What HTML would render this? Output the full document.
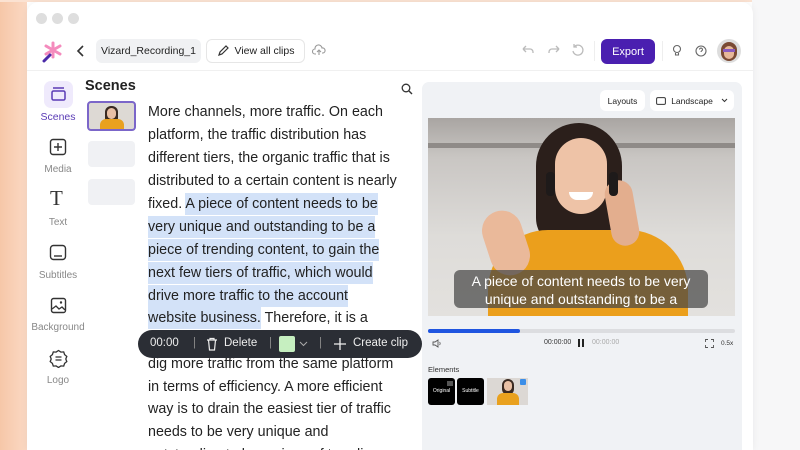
<!DOCTYPE html>
<html style="width:800px;height:450px;overflow:hidden"><head><meta charset="utf-8"><style>
*{box-sizing:border-box;margin:0;padding:0}
body{width:800px;height:450px;overflow:hidden;font-family:"Liberation Sans",sans-serif;background:linear-gradient(90deg,#f6c7a8 0px,#fbd9c4 27px,#fff 27px);position:relative}
.bg-r{position:absolute;left:752px;top:0;width:48px;height:450px;background:#f7f7f8}
.bg-t{position:absolute;left:0;top:0;width:800px;height:2px;background:#fbe2d2}
.win{position:absolute;left:27px;top:2px;width:726px;height:448px;background:#fff;border-radius:12px 12px 0 0;box-shadow:0 0 8px rgba(0,0,0,.06)}
.abs{position:absolute}
.dot{position:absolute;top:11px;width:11px;height:11px;border-radius:50%;background:#dedede}
.btn{position:absolute;border-radius:6px;font-size:11px;color:#222;display:flex;align-items:center;justify-content:center}
.side{position:absolute;width:60px;text-align:center;font-size:10px;color:#888}
.line{position:absolute;left:148px;font-size:14.3px;color:#222;height:23px;line-height:23px;white-space:nowrap}
.hl{background:#d3e2f8;padding:3px 0}
</style></head><body>
<div class="bg-t"></div><div class="bg-r"></div>
<div class="win">
 <div class="dot" style="left:9px"></div><div class="dot" style="left:25px"></div><div class="dot" style="left:41px"></div>
</div>
<svg class="abs" style="left:42px;top:41px" width="20" height="22" viewBox="0 0 20 22"><g stroke="#f48bbd" stroke-width="3" stroke-linecap="round"><line x1="11" y1="2" x2="11" y2="16"/><line x1="4" y1="5" x2="18" y2="13"/><line x1="18" y1="5" x2="4" y2="13"/></g><line x1="2" y1="20" x2="8" y2="14" stroke="#4b2ba8" stroke-width="3" stroke-linecap="round"/></svg>
<svg class="abs" style="left:76px;top:44px" width="10" height="14"><path d="M7 2L2 7l5 5" stroke="#333" stroke-width="1.6" fill="none"/></svg>
<div class="btn" style="left:96px;top:39px;width:105px;height:24px;background:#f0f1f3;font-size:10.5px">Vizard_Recording_1</div>
<div class="btn" style="left:206px;top:39px;width:99px;height:24px;border:1px solid #e6e6e6;font-size:10.5px"><svg width="12" height="12" style="margin-right:6px"><path d="M2 10l1-3 6-6 2 2-6 6z" stroke="#333" fill="none" stroke-width="1.2"/></svg>View all clips</div>
<svg class="abs" style="left:312px;top:44px" width="14" height="12"><path d="M4 10H3a2.5 2.5 0 010-5 3.5 3.5 0 017-1 2.5 2.5 0 011 5h-1M7 11V6M5 8l2-2 2 2" stroke="#999" fill="none" stroke-width="1.1"/></svg>
<div class="abs" style="left:27px;top:70px;width:726px;height:1px;background:#f0f0f0"></div>
<svg class="abs" style="left:520px;top:43px" width="70" height="14"><g stroke="#bbb" fill="none" stroke-width="1.3"><path d="M3 6h7a3 3 0 013 3v1M3 6l3-3M3 6l3 3"/><path d="M39 6h-7a3 3 0 00-3 3v1M39 6l-3-3M39 6l-3 3"/><path d="M54 4a5 5 0 11-1 4M54 1v3h3"/></g></svg>
<div class="abs" style="left:594px;top:41px;width:1px;height:20px;background:#eee"></div>
<div class="btn" style="left:601px;top:39px;width:54px;height:25px;background:#4a1fb0;color:#fff;font-size:11px">Export</div>
<div class="abs" style="left:662px;top:41px;width:1px;height:20px;background:#eee"></div>
<svg class="abs" style="left:671px;top:44px" width="40" height="14"><g stroke="#666" fill="none" stroke-width="1.1"><circle cx="6" cy="5" r="3.5"/><path d="M4.5 9v2h3V9"/><circle cx="30" cy="7" r="5"/><path d="M28.5 5.5a1.5 1.5 0 113 .2c0 1-1.5 1-1.5 2.3"/></g></svg>
<div class="abs" style="left:717px;top:39px;width:24px;height:24px;border-radius:50%;background:#ddd;overflow:hidden"><div class="abs" style="left:4px;top:3px;width:16px;height:19px;border-radius:8px;background:#7a4a34"></div><div class="abs" style="left:7px;top:7px;width:10px;height:13px;border-radius:5px;background:#e7b89a"></div><div class="abs" style="left:6px;top:10px;width:12px;height:3px;background:#8a5bbf"></div></div>
<div class="abs" style="left:44px;top:81px;width:29px;height:27px;border-radius:7px;background:#efeafc"></div>
<svg class="abs" style="left:50px;top:86px" width="17" height="16"><g stroke="#5a3bb5" fill="none" stroke-width="1.5"><line x1="3" y1="2" x2="14" y2="2"/><rect x="2" y="5" width="13" height="9" rx="1.5"/></g></svg>
<div class="side" style="left:28px;top:111px;color:#5a3bb5;font-size:10.5px">Scenes</div>
<svg class="abs" style="left:49px;top:138px" width="18" height="18"><rect x="1.5" y="1.5" width="15" height="15" rx="2.5" stroke="#333" fill="none" stroke-width="1.4"/><path d="M9 5v8M5 9h8" stroke="#333" stroke-width="1.4"/></svg>
<div class="side" style="left:28px;top:164px">Media</div>
<div class="abs" style="left:50px;top:186px;font-family:'Liberation Serif',serif;font-size:21px;color:#333">T</div>
<div class="side" style="left:28px;top:217px">Text</div>
<svg class="abs" style="left:49px;top:244px" width="18" height="18"><rect x="1.5" y="1.5" width="15" height="14" rx="3" stroke="#333" fill="none" stroke-width="1.4"/><path d="M5 12h8" stroke="#333" stroke-width="1.4"/></svg>
<div class="side" style="left:28px;top:270px">Subtitles</div>
<svg class="abs" style="left:50px;top:297px" width="17" height="17"><rect x="1.5" y="1.5" width="14" height="14" rx="2" stroke="#333" fill="none" stroke-width="1.4"/><path d="M2 12l4-3 3 3 3-2 3 3" stroke="#333" fill="none" stroke-width="1.3"/><circle cx="11" cy="5.5" r="1.2" fill="#333"/></svg>
<div class="side" style="left:28px;top:322px">Background</div>
<svg class="abs" style="left:49px;top:349px" width="19" height="19"><path d="M9.5 1.5l2.4 1.6 2.8-.2.9 2.7 2.2 1.8-1 2.6 1 2.6-2.2 1.8-.9 2.7-2.8-.2-2.4 1.6-2.4-1.6-2.8.2-.9-2.7-2.2-1.8 1-2.6-1-2.6 2.2-1.8.9-2.7 2.8.2z" stroke="#333" fill="none" stroke-width="1.3"/><path d="M6.5 8h6M6.5 11h6" stroke="#333" stroke-width="1.3"/></svg>
<div class="side" style="left:28px;top:375px">Logo</div>
<div class="abs" style="left:85px;top:78px;font-size:14.5px;font-weight:bold;color:#222">Scenes</div>
<svg class="abs" style="left:401px;top:83px" width="12" height="12"><circle cx="5" cy="5" r="3.8" stroke="#333" fill="none" stroke-width="1.3"/><path d="M8 8l3 3" stroke="#333" stroke-width="1.4"/></svg>
<div class="abs" style="left:87px;top:101px;width:49px;height:30px;border:2px solid #7b66c9;border-radius:4px;overflow:hidden;background:#ddd9d4">
 <div class="abs" style="left:16px;top:3px;width:13px;height:18px;border-radius:6px;background:#3a2a22"></div>
 <div class="abs" style="left:18px;top:5px;width:9px;height:11px;border-radius:5px;background:#e9c0a5"></div>
 <div class="abs" style="left:11px;top:16px;width:24px;height:12px;border-radius:6px 6px 0 0;background:#e9a11e"></div>
</div>
<div class="abs" style="left:88px;top:141px;width:47px;height:26px;border-radius:4px;background:#f0f1f4"></div>
<div class="abs" style="left:88px;top:179px;width:47px;height:26px;border-radius:4px;background:#f0f1f4"></div>
<div class="line" style="top:101px">More channels, more traffic. On each</div>
<div class="line" style="top:124px">platform, the traffic distribution has</div>
<div class="line" style="top:147px">different tiers, the organic traffic that is</div>
<div class="line" style="top:170px">distributed to a certain content is nearly</div>
<div class="line" style="top:193px">fixed. <span class="hl">A piece of content needs to be</span></div>
<div class="line" style="top:216px"><span class="hl">very unique and outstanding to be a</span></div>
<div class="line" style="top:239px"><span class="hl">piece of trending content, to gain the</span></div>
<div class="line" style="top:262px"><span class="hl">next few tiers of traffic, which would</span></div>
<div class="line" style="top:285px"><span class="hl">drive more traffic to the account</span></div>
<div class="line" style="top:307px"><span class="hl">website business.</span> Therefore, it is a</div>
<div class="line" style="top:353px">dig more traffic from the same platform</div>
<div class="line" style="top:376px">in terms of efficiency. A more efficient</div>
<div class="line" style="top:398px">way is to drain the easiest tier of traffic</div>
<div class="line" style="top:421px">needs to be very unique and</div>
<div class="line" style="top:444px">outstanding to be a piece of trending</div>
<div class="abs" style="left:138px;top:330px;width:284px;height:28px;border-radius:14px;background:#2b2e35;color:#eee;font-size:11.5px">
 <span class="abs" style="left:12px;top:7px">00:00</span>
 <span class="abs" style="left:55px;top:7px;color:#888">|</span>
 <svg class="abs" style="left:68px;top:7px" width="12" height="14"><path d="M1 3h10M4 3V1.5h4V3M2.5 3l1 10h5l1-10" stroke="#eee" fill="none" stroke-width="1.2"/></svg>
 <span class="abs" style="left:86px;top:7px">Delete</span>
 <span class="abs" style="left:131px;top:7px;color:#888">|</span>
 <div class="abs" style="left:141px;top:6px;width:16px;height:16px;border-radius:2px;background:#c6efc0"></div>
 <svg class="abs" style="left:161px;top:11px" width="9" height="6"><path d="M1 1l3.5 3.5L8 1" stroke="#aaa" fill="none"/></svg>
 <span class="abs" style="left:181px;top:7px;color:#888">|</span>
 <svg class="abs" style="left:196px;top:8px" width="12" height="12"><path d="M6 0v12M0 6h12" stroke="#eee" stroke-width="1.3"/></svg>
 <span class="abs" style="left:215px;top:7px">Create clip</span>
</div>
<div class="abs" style="left:422px;top:82px;width:320px;height:368px;background:#f0f2f5;border-radius:7px 7px 0 0"></div>
<div class="btn" style="left:600px;top:90px;width:45px;height:21px;background:#fff;font-size:8.5px">Layouts</div>
<div class="btn" style="left:650px;top:90px;width:84px;height:21px;background:#fff;font-size:8.5px"><svg width="10" height="8" style="margin-right:5px"><rect x=".6" y=".6" width="8.8" height="6.8" rx="1.3" stroke="#333" fill="none"/></svg>Landscape<svg width="7" height="5" style="margin-left:8px"><path d="M1 1l2.5 2.5L6 1" stroke="#333" fill="none"/></svg></div>
<div class="abs" style="left:428px;top:118px;width:307px;height:198px;overflow:hidden;background:linear-gradient(180deg,#a9a5a2 0,#c9c6c3 20%,#dedcd9 60%,#e3e1de 100%)">
 <div class="abs" style="left:0;top:25px;width:307px;height:5px;background:#8f8b88"></div>
 <div class="abs" style="left:108px;top:5px;width:86px;height:125px;border-radius:43px 43px 30px 30px;background:#2b1f1b"></div>
 <div class="abs" style="left:60px;top:112px;width:200px;height:110px;border-radius:60px 60px 0 0;background:#eb9f1c"></div>
 <div class="abs" style="left:127px;top:20px;width:52px;height:76px;border-radius:26px 26px 26px 26px;background:#eec3a7"></div>
 <div class="abs" style="left:141px;top:74px;width:24px;height:8px;border-radius:0 0 12px 12px;background:#fff"></div>
 <div class="abs" style="left:58px;top:92px;width:40px;height:66px;border-radius:20px;background:#eab99a;transform:rotate(-18deg)"></div>
 <div class="abs" style="left:180px;top:62px;width:28px;height:66px;border-radius:14px;background:#e3ae8e;transform:rotate(-10deg)"></div>
 <div class="abs" style="left:118px;top:54px;width:9px;height:24px;border-radius:4px;background:#1e1a1a"></div>
 <div class="abs" style="left:181px;top:54px;width:9px;height:24px;border-radius:4px;background:#1e1a1a"></div>
</div>
<div class="abs" style="left:454px;top:270px;width:254px;height:38px;border-radius:6px;background:rgba(70,70,70,.72);color:#fff;font-size:14px;line-height:18px;text-align:center;padding-top:2px">A piece of content needs to be very<br>unique and outstanding to be a</div>
<div class="abs" style="left:428px;top:329px;width:307px;height:4px;border-radius:2px;background:#dcdde0"></div>
<div class="abs" style="left:428px;top:329px;width:92px;height:4px;border-radius:2px;background:#1f55e0"></div>
<svg class="abs" style="left:432px;top:339px" width="10" height="9"><path d="M1 3h2l3-2v7l-3-2H1z" stroke="#555" fill="none" stroke-width=".9"/><path d="M7.5 3a2 2 0 010 3" stroke="#555" fill="none" stroke-width=".8"/></svg>
<div class="abs" style="left:544px;top:339px;font-size:7px;color:#333">00:00:00</div>
<div class="abs" style="left:578px;top:339px;width:2px;height:8px;background:#222"></div>
<div class="abs" style="left:582px;top:339px;width:2px;height:8px;background:#222"></div>
<div class="abs" style="left:592px;top:339px;font-size:7px;color:#aaa">00:00:00</div>
<svg class="abs" style="left:705px;top:339px" width="9" height="9"><path d="M.5 3V.5H3M6 .5h2.5V3M8.5 6v2.5H6M3 8.5H.5V6" stroke="#555" fill="none" stroke-width=".9"/></svg>
<div class="abs" style="left:721px;top:340px;font-size:6.5px;color:#333">0.5x</div>
<div class="abs" style="left:428px;top:365px;font-size:7.5px;color:#333">Elements</div>
<div class="abs" style="left:428px;top:378px;width:27px;height:27px;border-radius:3px;background:#000;color:#fff;font-size:5px;text-align:center;line-height:27px">Original</div>
<div class="abs" style="left:447px;top:381px;width:6px;height:5px;background:#555"></div>
<div class="abs" style="left:457px;top:378px;width:27px;height:27px;border-radius:3px;background:#000;color:#fff;font-size:5px;text-align:center;line-height:27px">Subtitle</div>
<div class="abs" style="left:487px;top:378px;width:41px;height:27px;background:#dcd8d4;overflow:hidden">
 <div class="abs" style="left:15px;top:1px;width:12px;height:16px;border-radius:6px;background:#3a2a22"></div>
 <div class="abs" style="left:17px;top:3px;width:8px;height:10px;border-radius:4px;background:#e9c0a5"></div>
 <div class="abs" style="left:10px;top:15px;width:22px;height:14px;border-radius:6px 6px 0 0;background:#e9a11e"></div>
 <div class="abs" style="left:33px;top:1px;width:6px;height:6px;border-radius:1px;background:#3b8ee8"></div>
</div>
</body></html>
